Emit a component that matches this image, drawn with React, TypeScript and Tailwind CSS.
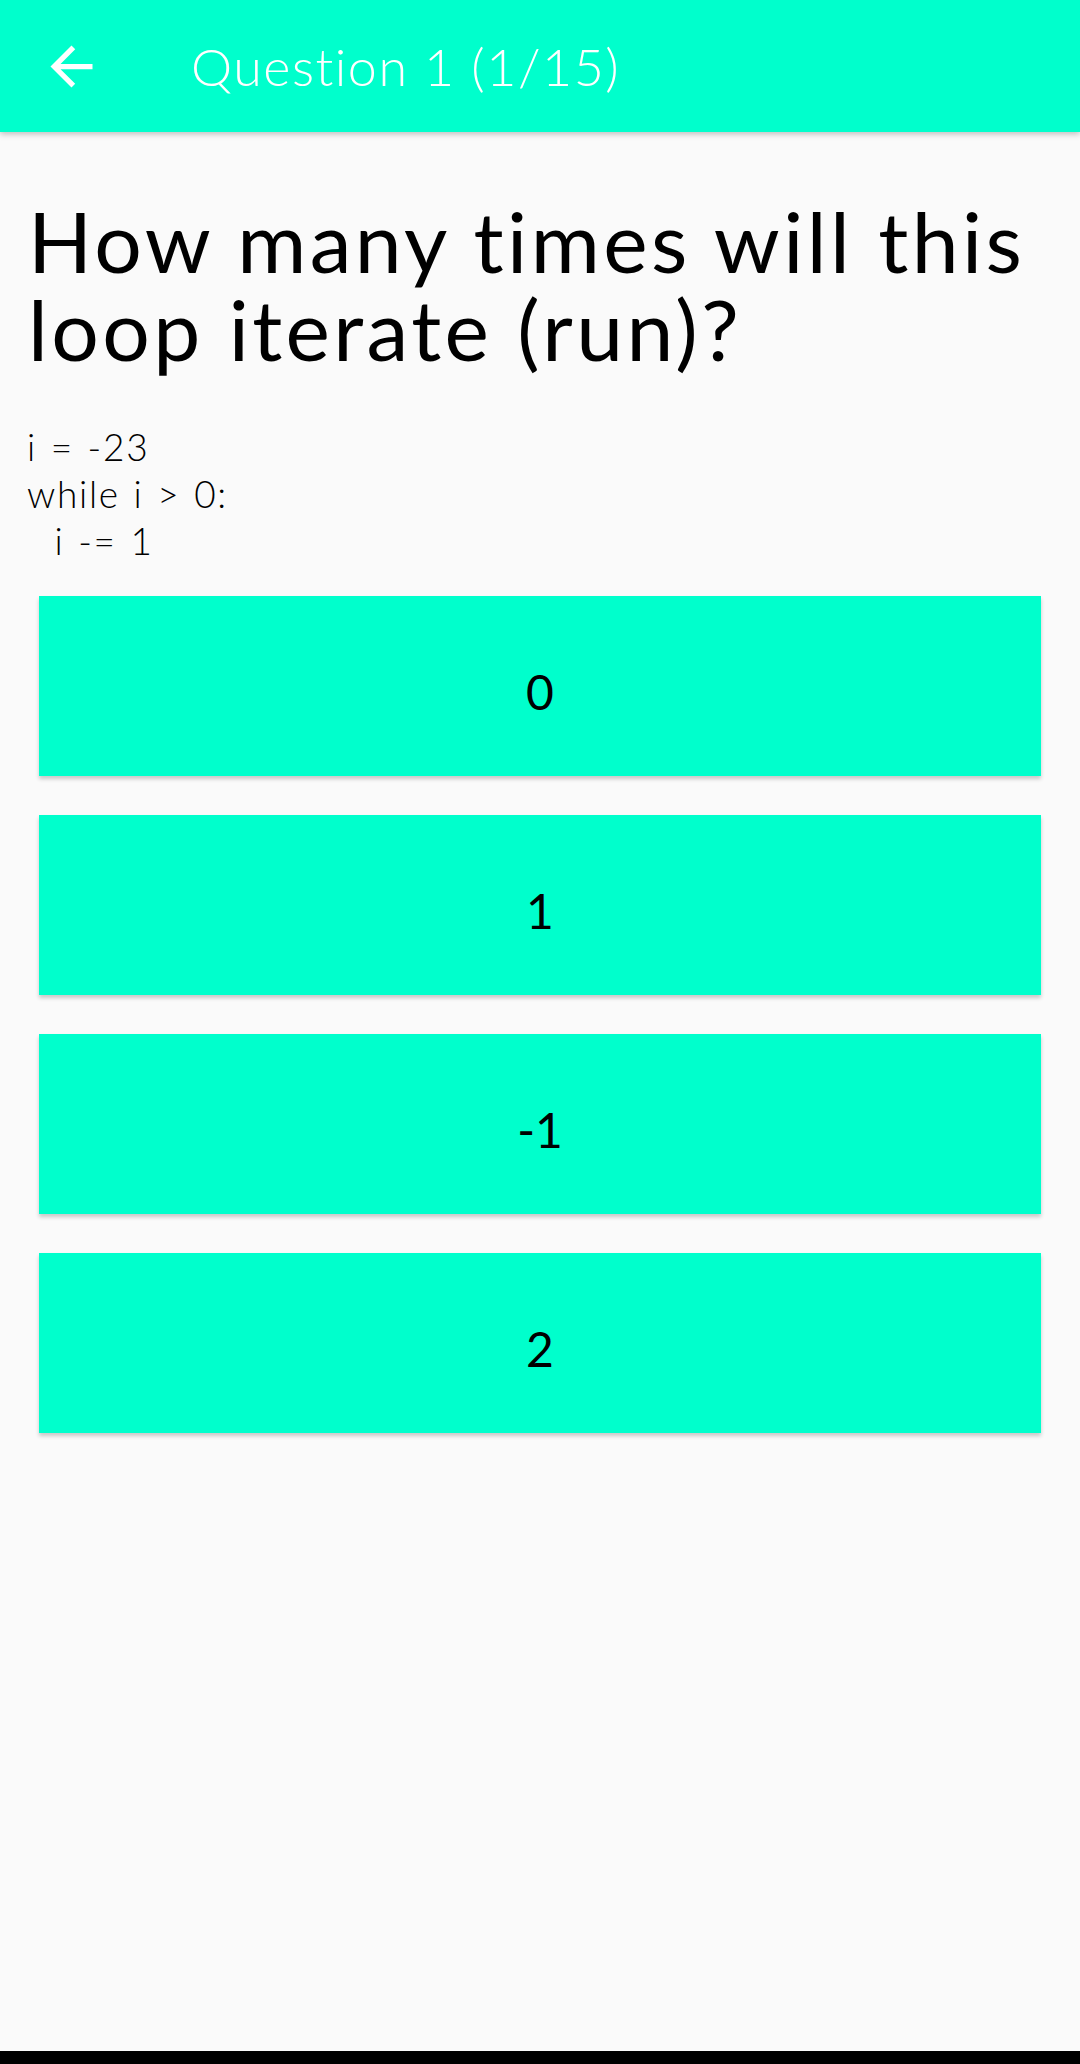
import React from "react";

const font = { fontFamily: "Lato, 'Noto Sans', sans-serif" };

function ArrowBack() {
  return (
    <svg width="63" height="63" viewBox="0 0 24 24" fill="#ffffff">
      <path d="M20 11H7.83l5.59-5.59L12 4l-8 8 8 8 1.41-1.41L7.83 13H20v-2z" />
    </svg>
  );
}

const answers = ["0", "1", "-1", "2"];

export default function App() {
  return (
    <div
      className="w-[1080px] h-[2064px] bg-[#fafafa] flex flex-col [font-variant-ligatures:none]"
      style={font}
    >
      <header className="h-[132px] bg-[#00ffcc] flex items-center shadow-[0_2px_6px_rgba(0,0,0,0.25)] relative z-10 shrink-0">
        <div className="w-[63px] h-[63px] ml-[40px]">
          <ArrowBack />
        </div>
        <h1 className="ml-[88px] text-white text-[52px] font-light leading-none tracking-[1.5px]">
          Question 1 (1/15)
        </h1>
      </header>

      <main className="flex-1 flex flex-col">
        <h2 className="px-[28px] pt-[65px] text-black text-[84px] font-normal leading-[88px] tracking-[3.4px]">
          How many times will this loop iterate (run)?
        </h2>
        <pre
          className="px-[27px] mt-[50px] text-black text-[37px] font-light leading-[47px] whitespace-pre tracking-[1.7px] [word-spacing:2px]"
          style={font}
        >
{`i = -23
while i > 0:
  i -= 1`}
        </pre>
        <div className="mt-[32px] px-[39px] flex flex-col gap-[39px]">
          {answers.map((a) => (
            <button
              key={a}
              className="h-[180px] w-full bg-[#00ffcc] flex items-center justify-center pt-[12px] text-black text-[48px] font-normal shadow-[0_3px_4px_rgba(0,0,0,0.2)]"
            >
              {a}
            </button>
          ))}
        </div>
      </main>

      <div className="h-[13px] bg-black shrink-0" />
    </div>
  );
}
